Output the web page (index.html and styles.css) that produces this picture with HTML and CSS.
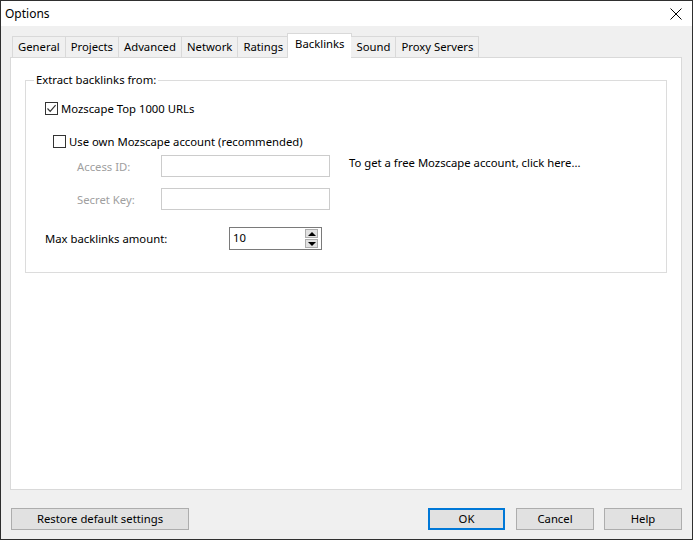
FILE: index.html
```html
<!DOCTYPE html>
<html lang="en">

<head>
	<meta charset="utf-8">
	<meta name="viewport" content="width=device-width, initial-scale=1.0">
	<title>Options</title>
	<link rel="stylesheet" href="styles.css">
</head>

<body>
	<div class="window">
		<div class="titlebar">
			<span class="caption">Options</span>
			<svg class="close" width="12" height="12" viewBox="0 0 12 12">
				<path d="M0.5 0.5 L11.5 11.5 M11.5 0.5 L0.5 11.5" stroke="#000" stroke-width="1" fill="none"/>
			</svg>
		</div>

		<div class="client">
			<div class="tabs">
				<span class="tab first">General</span>
				<span class="tab">Projects</span>
				<span class="tab">Advanced</span>
				<span class="tab">Network</span>
				<span class="tab">Ratings</span>
				<span class="tab active">Backlinks</span>
				<span class="tab">Sound</span>
				<span class="tab">Proxy Servers</span>
			</div>

			<div class="panel">
				<fieldset class="group">
					<legend>Extract backlinks from:</legend>

					<div class="row top1000">
						<span class="check checked">
							<svg width="11" height="11" viewBox="0 0 11 11">
								<path d="M1.5 5.5 L4.2 8.3 L9.6 2.2" stroke="#333" stroke-width="1.2" fill="none"/>
							</svg>
						</span>
						<span class="label">Mozscape Top 1000 URLs</span>
					</div>

					<div class="row own">
						<span class="check"></span>
						<span class="label">Use own Mozscape account (recommended)</span>
					</div>

					<div class="row field">
						<span class="flabel disabled">Access ID:</span>
						<span class="edit"></span>
						<span class="link">To get a free Mozscape account, click here...</span>
					</div>

					<div class="row field">
						<span class="flabel disabled">Secret Key:</span>
						<span class="edit"></span>
					</div>

					<div class="row amount">
						<span class="alabel">Max backlinks amount:</span>
						<span class="spin">
							<span class="spin_val">10</span>
							<span class="spin_btns">
								<span class="spin_btn"><span class="arr up"></span></span>
								<span class="spin_btn"><span class="arr down"></span></span>
							</span>
						</span>
					</div>
				</fieldset>
			</div>

			<div class="buttons">
				<span class="btn restore">Restore default settings</span>
				<span class="spacer"></span>
				<span class="btn default">OK</span>
				<span class="btn">Cancel</span>
				<span class="btn">Help</span>
			</div>
		</div>
	</div>
</body>

</html>
```

FILE: styles.css
```css
html, body {
	margin:0;
	padding:0;
}

body {
	font-family:"Noto Sans", "Open Sans", sans-serif;
	font-size:11.3px;
	color:#000;
	background:#f0f0f0;
}

.window {
	width:693px;
	height:540px;
	box-sizing:border-box;
	border:1px solid #2f2f2f;
	background:#f0f0f0;
	display:flex;
	flex-direction:column;
}

.titlebar {
	height:25px;
	background:#fff;
	display:flex;
	align-items:center;
	justify-content:space-between;
	padding:0 10px 0 4px;
}

.caption {
	line-height:16px;
	font-size:12px;
}

.client {
	flex:1;
	display:flex;
	flex-direction:column;
	padding:8px 10px 0 9px;
}

/* tabs */

.tabs {
	display:flex;
	align-items:flex-end;
	height:23px;
	padding-left:2px;
	position:relative;
	z-index:1;
}

.tab {
	height:20px;
	line-height:20px;
	padding:0 5px;
	border:1px solid #d9d9d9;
	border-bottom:none;
	border-left:none;
	background:#f0f0f0;
	white-space:nowrap;
}

.tab.first {
	border-left:1px solid #d9d9d9;
}

.tab.active {
	line-height:19px;
	margin:0 -1px -1px -2px;
	padding:0 7px 0 7px;
	border-left:1px solid #d9d9d9;
	background:#fff;
	height:24px;
}

.panel {
	height:433px;
	box-sizing:border-box;
	border:1px solid #d9d9d9;
	background:#fff;
	padding:14px 14px 0 14px;
}

/* group box */

.group {
	margin:0;
	padding:0;
	height:201px;
	box-sizing:border-box;
	border:1px solid #dcdcdc;
}

.group legend {
	margin-left:8px;
	padding:0 2px;
	line-height:16px;
}

.row {
	display:flex;
	align-items:center;
}

.top1000 {
	margin-top:12px;
	padding-left:19px;
	height:16px;
}

.own {
	margin-top:17px;
	padding-left:27px;
	height:16px;
}

.check {
	width:11px;
	height:11px;
	border:1px solid #333;
	background:#fff;
	margin-right:3px;
	display:flex;
}

.field {
	margin-top:6px;
	padding-left:51px;
	height:22px;
}

.field + .field {
	margin-top:11px;
}

.flabel {
	width:84px;
}

.disabled {
	color:#a0a0a0;
}

.edit {
	width:167px;
	height:20px;
	border:1px solid #cccccc;
	background:#fff;
}

.link {
	margin-left:19px;
	margin-top:-7px;
}

.amount {
	margin-top:17px;
	padding-left:19px;
	height:23px;
}

.alabel {
	width:184px;
}

.spin {
	height:21px;
	border:1px solid #7a7a7a;
	display:flex;
	align-items:center;
	justify-content:space-between;
	padding:0 3px 0 3px;
	width:85px;
}

.spin_val {
	line-height:16px;
	margin-top:-2px;
}

.spin_btns {
	display:flex;
	flex-direction:column;
	gap:1px;
}

.spin_btn {
	width:11px;
	height:7px;
	border:1px solid #adadad;
	background:#e1e1e1;
	display:flex;
	align-items:center;
	justify-content:center;
}

.arr {
	width:0;
	height:0;
	border-left:4px solid transparent;
	border-right:4px solid transparent;
}

.arr.up {
	border-bottom:4px solid #000;
}

.arr.down {
	border-top:4px solid #000;
}

/* dialog buttons */

.buttons {
	display:flex;
	margin-top:18px;
	margin-left:1px;
	gap:10px;
}

.spacer {
	flex:1;
}

.btn {
	width:76px;
	height:20px;
	line-height:20px;
	text-align:center;
	border:1px solid #adadad;
	background:#e1e1e1;
}

.btn.restore {
	width:176px;
}

.btn.default {
	border:2px solid #0078d7;
	width:73px;
	height:18px;
	line-height:18px;
	margin-right:1px;
}
```
